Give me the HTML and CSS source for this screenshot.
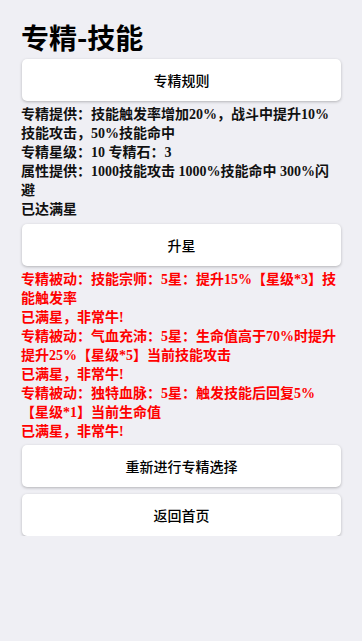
FILE: index.html
```html
<!DOCTYPE html>
<html lang="zh">
<head>
<meta charset="utf-8">
<link rel="stylesheet" href="styles.css">
</head>
<body>
<div class="page">
  <h1 class="title">专精-技能</h1>
  <div class="btn">专精规则</div>
  <div class="info">
    <div>专精提供：技能触发率增加20%，战斗中提升10%技能攻击，50%技能命中</div>
    <div>专精星级：10 专精石：3</div>
    <div>属性提供：1000技能攻击 1000%技能命中 300%闪避</div>
    <div>已达满星</div>
  </div>
  <div class="btn">升星</div>
  <div class="info red">
    <div>专精被动：技能宗师：5星：提升15%【星级*3】技能触发率</div>
    <div>已满星，非常牛!</div>
    <div>专精被动：气血充沛：5星：生命值高于70%时提升提升25%【星级*5】当前技能攻击</div>
    <div>已满星，非常牛!</div>
    <div>专精被动：独特血脉：5星：触发技能后回复5%【星级*1】当前生命值</div>
    <div>已满星，非常牛!</div>
  </div>
  <div class="btn">重新进行专精选择</div>
  <div class="btn gap">返回首页</div>
</div>
</body>
</html>
```
FILE: styles.css
```css
html, body {
  margin: 0;
  padding: 0;
  background: #efeff4;
}
.page {
  padding: 20px 20px 0 21px;
  display: flex;
  flex-direction: column;
}
.title {
  margin: 0;
  font-family: "Noto Sans CJK SC", "Noto Sans", sans-serif;
  font-size: 28px;
  font-weight: 700;
  line-height: 34px;
  color: #000;
}
.btn {
  margin: 5px 1px 0 1px;
  height: 42px;
  background: #fff;
  border-radius: 5px;
  box-shadow: 0 1px 3px rgba(0, 0, 0, 0.25);
  display: flex;
  align-items: center;
  justify-content: center;
  font-family: "Noto Sans CJK SC", sans-serif;
  font-size: 14px;
  font-weight: 500;
  color: #000;
}
.btn.gap {
  margin-top: 7px;
}
.info {
  margin: 4px 0 0 0;
  font-family: "Liberation Serif", "Noto Sans CJK SC", serif;
  font-size: 14px;
  font-weight: 700;
  line-height: 19px;
  color: #111;
}
.info.red {
  color: #ff0000;
  margin-bottom: -1px;
}
```
